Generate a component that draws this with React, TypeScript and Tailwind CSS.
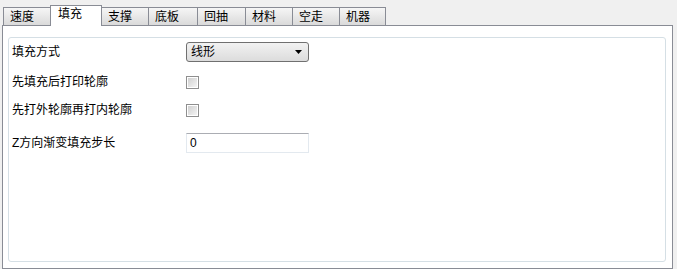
import { ReactNode } from "react";

const tabs = ["速度", "填充", "支撑", "底板", "回抽", "材料", "空走", "机器"];
const widths = [48, 52, 48, 50, 49, 48, 48, 47];

const Row = ({ label, children, className }: { label: string; children: ReactNode; className: string }) => (
  <div className={`flex items-center h-[20px] ${className}`}>
    <div className="w-[177px] pl-[3px] whitespace-nowrap">{label}</div>
    {children}
  </div>
);

const CheckBox = () => (
  <div className="w-[13px] h-[13px] border border-[#8f8f8f] bg-white p-[1px]">
    <div className="w-full h-full bg-gradient-to-br from-[#d0d0d0] to-[#f4f4f4]" />
  </div>
);

const App = () => {
  return (
    <div
      className="w-[677px] h-[269px] bg-[#f0f0f0] text-[12px] leading-none text-black"
      style={{ fontFamily: '"Liberation Sans", "Noto Sans CJK SC", sans-serif' }}
    >
      <div className="flex items-end h-[25px] pl-[3px] pt-[4px]">
        {tabs.map((t, i) =>
          i === 1 ? (
            <div
              key={t}
              style={{ width: widths[i] }}
              className="h-[21px] -ml-px bg-white border border-b-0 border-[#898c95] pl-[7px] pt-[2px] relative z-10 -mb-px"
            >
              {t}
            </div>
          ) : (
            <div
              key={t}
              style={{ width: widths[i] }}
              className={`h-[18px] ${i > 0 ? "-ml-px" : ""} border border-b-0 border-[#898c95] bg-gradient-to-b from-[#f6f6f6] to-[#dadada] pl-[6px] pt-[3px]`}
            >
              {t}
            </div>
          )
        )}
      </div>
      <div className="ml-[2px] w-[671px] h-[244px] bg-white border border-[#898c95] pt-[11px] pl-[5px]">
        <div className="w-[658px] h-[225px] border border-[#d5dfe5] rounded-[3px] pt-[4px]">
          <Row label="填充方式" className="">
            <div className="w-[123px] h-[20px] border border-[#707070] rounded-[3px] bg-gradient-to-b from-[#f2f2f2] to-[#dcdcdc] flex items-center justify-between pl-[4px] pr-[6px]">
              <span>线形</span>
              <svg width="7" height="4" viewBox="0 0 7 4">
                <path d="M0 0h7L3.5 4z" fill="#000" />
              </svg>
            </div>
          </Row>
          <Row label="先填充后打印轮廓" className="mt-[10px]">
            <CheckBox />
          </Row>
          <Row label="先打外轮廓再打内轮廓" className="mt-[8px]">
            <CheckBox />
          </Row>
          <Row label="Z方向渐变填充步长" className="mt-[13px]">
            <div className="w-[123px] h-[20px] border border-[#e3e9ef] border-t-[#abadb3] bg-white flex items-center pl-[3px]">
              0
            </div>
          </Row>
        </div>
      </div>
    </div>
  );
};

export default App;
